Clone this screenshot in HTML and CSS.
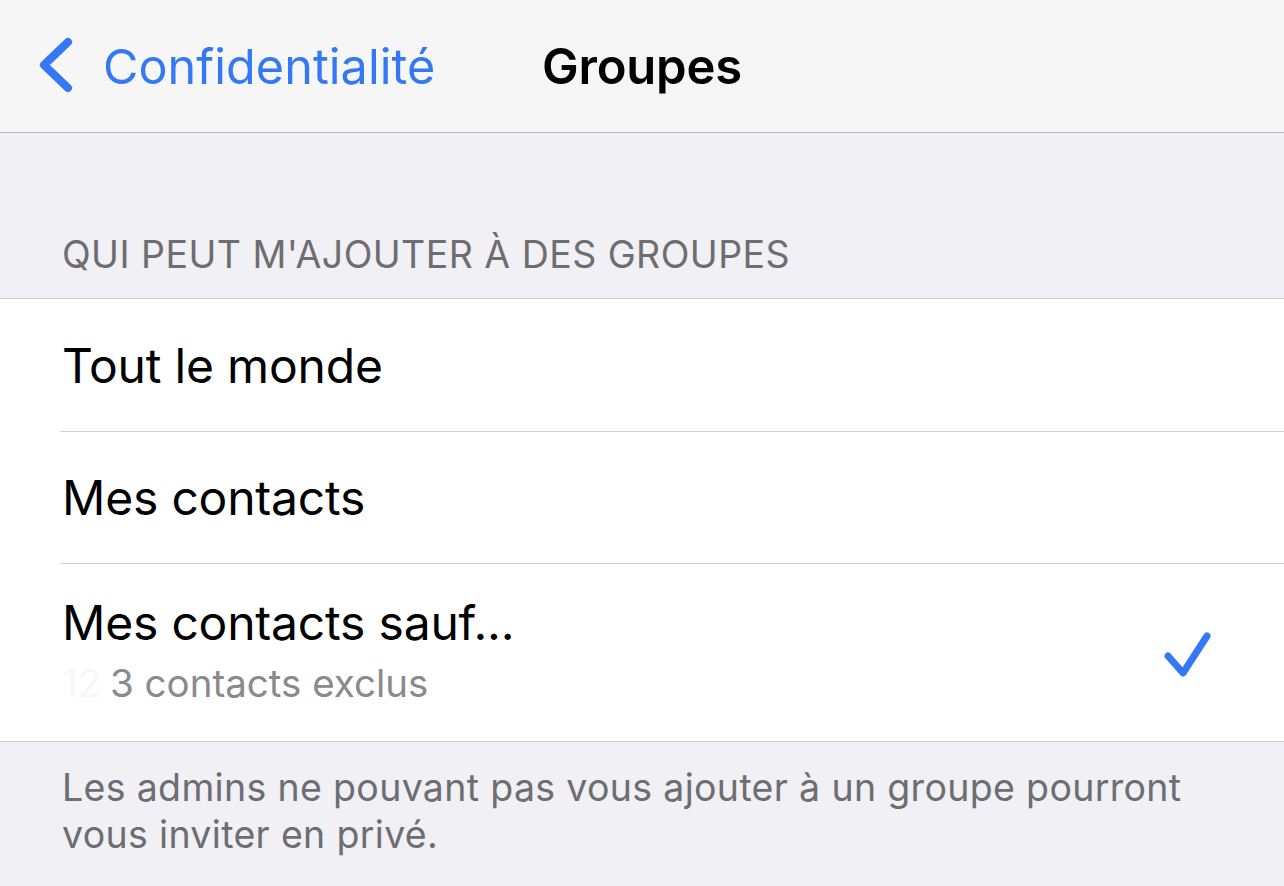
FILE: index.html
```html
<!DOCTYPE html>
<html lang="fr">
<head>
<meta charset="utf-8">
<title>Groupes</title>
<link rel="stylesheet" href="styles.css">
</head>
<body>
<header class="navbar">
  <a class="back" href="#">
    <svg class="chevron" width="36" height="60" viewBox="0 0 36 60" aria-hidden="true">
      <path d="M30 6 L6 29 L30 52" fill="none" stroke="#3478f6" stroke-width="8" stroke-linecap="round" stroke-linejoin="round"/>
    </svg>
    <span class="back-label">Confidentialité</span>
  </a>
  <h1 class="title">Groupes</h1>
  <div class="spacer"></div>
</header>

<main class="content">
  <div class="section-header">QUI PEUT M'AJOUTER À DES GROUPES</div>
  <ul class="group">
    <li class="row"><span class="row-title">Tout le monde</span></li>
    <li class="row"><span class="row-title">Mes contacts</span></li>
    <li class="row row-tall">
      <div class="row-text">
        <span class="row-title">Mes contacts sauf...</span>
        <span class="row-subtitle"><span class="erased">12</span>3 contacts exclus</span>
      </div>
      <svg class="check" width="56" height="56" viewBox="0 0 56 56" aria-hidden="true">
        <path d="M6 30 L21 47 L45 10" fill="none" stroke="#3478f6" stroke-width="7" stroke-linecap="round" stroke-linejoin="round"/>
      </svg>
    </li>
  </ul>
  <p class="footer-note">Les admins ne pouvant pas vous ajouter à un groupe pourront vous inviter en privé.</p>
</main>
</body>
</html>
```

FILE: styles.css
```css
* { box-sizing: border-box; }

html, body {
  margin: 0;
  padding: 0;
}

body {
  background: #f0f0f5;
  font-family: Inter, "Noto Sans", "Liberation Sans", sans-serif;
  color: #000;
  width: 1284px;
  height: 886px;
  overflow: hidden;
}

.navbar {
  height: 133px;
  background: #f6f6f6;
  border-bottom: 1px solid #b8b8ba;
  display: grid;
  grid-template-columns: 1fr auto 1fr;
  align-items: center;
}

.back {
  display: flex;
  align-items: center;
  text-decoration: none;
  color: #3478f6;
  padding-left: 38px;
}

.chevron {
  display: block;
  margin-right: 29px;
}

.back-label {
  font-size: 48.5px;
  letter-spacing: 0.05px;
}

.title {
  margin: 0;
  font-size: 49px;
  font-weight: 600;
  letter-spacing: -0.2px;
}

.content {
  display: flex;
  flex-direction: column;
}

.section-header {
  height: 165px;
  display: flex;
  align-items: flex-end;
  padding: 0 0 20px 62px;
  font-size: 37.5px;
  line-height: 47px;
  color: #6d6d72;
  letter-spacing: 0.45px;
}

.group {
  list-style: none;
  margin: 0;
  padding: 0;
  background: #fff;
  border-top: 1px solid #c6c6c8;
  border-bottom: 1px solid #c6c6c8;
}

.row {
  margin-left: 60px;
  height: 132px;
  display: flex;
  align-items: center;
  padding-left: 2px;
}

.row + .row {
  border-top: 1px solid #cfcfd2;
}

.row-title {
  font-size: 48px;
  line-height: 61px;
  letter-spacing: -0.2px;
}

.row-tall {
  height: 178px;
  justify-content: space-between;
  padding-right: 66px;
}

.row-text {
  display: flex;
  flex-direction: column;
  gap: 3px;
  padding-bottom: 4px;
}

.row-subtitle {
  font-size: 38.5px;
  line-height: 54px;
  color: #8a8a8e;
}

.erased {
  display: inline-block;
  width: 48px;
  color: #f7f7f7;
}

.check {
  display: block;
  margin-top: 2px;
}

.footer-note {
  margin: 0;
  padding: 22px 60px 0 62px;
  font-size: 37.5px;
  line-height: 47px;
  color: #6d6d72;
  letter-spacing: 0.33px;
}
```
